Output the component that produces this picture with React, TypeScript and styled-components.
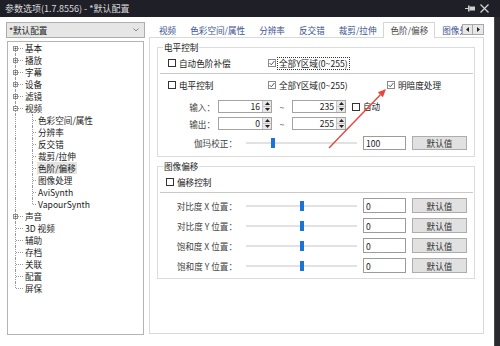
import React from "react";
import styled, { createGlobalStyle } from "styled-components";

const FONT = `"Noto Sans CJK SC", "Noto Sans", sans-serif`;

const Global = createGlobalStyle`
  html, body { margin: 0; padding: 0; background: #fff; }
  body { font-family: ${FONT}; }
  * { box-sizing: border-box; }
`;

const Screen = styled.div`
  position: relative;
  width: 500px;
  height: 346px;
  overflow: hidden;
  display: flex;
  flex-direction: column;
  background: #fff;
  font-family: ${FONT};
  font-size: 8.6px;
  color: #222;
`;

const TitleBar = styled.div`
  height: 17px;
  flex: none;
  background: #1f1f28;
  display: flex;
  align-items: center;
  padding: 0 11px 0 5px;
  color: #dcdcdc;
  font-size: 9px;
`;
const TitleText = styled.div`
  flex: 1;
  white-space: nowrap;
`;
const TitleIcons = styled.div`
  display: flex;
  align-items: center;
  gap: 5px;
`;

const Body = styled.div`
  flex: 1;
  display: flex;
  min-height: 0;
`;
const Win = styled.div`
  width: 494px;
  flex: none;
  display: flex;
  padding: 5px 10px 0 6px;
  gap: 4px;
  background: #fff;
`;
const Strip = styled.div`
  flex: 1;
  background: #2a2a2e;
  border-left: 1px solid #4a4a4e;
`;

/* ---------- left column ---------- */
const LeftCol = styled.div`
  width: 139px;
  flex: none;
  display: flex;
  flex-direction: column;
  gap: 3px;
`;
const Combo = styled.div`
  height: 16px;
  border: 1px solid #adadad;
  background: #e6e6e6;
  display: flex;
  align-items: center;
  padding: 0 5px 0 2px;
  line-height: 14px;
`;
const ComboText = styled.span`
  flex: 1;
`;
const TreeBox = styled.div`
  margin-left: 1px;
  width: 137px;
  height: 294px;
  border: 1px solid #b4b4b4;
  background: #fff;
  display: flex;
  flex-direction: column;
`;
const TreeRow = styled.div`
  height: 12px;
  display: flex;
  align-items: stretch;
`;
const Conn = styled.span<{ $w: number; $x: number; $top: boolean; $bottom: boolean; $tick: boolean }>`
  position: relative;
  flex: none;
  width: ${(p) => p.$w}px;
  height: 12px;
  &::before {
    content: "";
    position: absolute;
    left: ${(p) => p.$x}px;
    top: ${(p) => (p.$top ? 0 : 6)}px;
    bottom: ${(p) => (p.$bottom ? 0 : 6)}px;
    border-left: 1px dotted #9a9a9a;
  }
  &::after {
    content: "";
    display: ${(p) => (p.$tick ? "block" : "none")};
    position: absolute;
    left: ${(p) => p.$x + 1}px;
    width: ${(p) => p.$w - p.$x - 2}px;
    top: 6px;
    border-top: 1px dotted #9a9a9a;
  }
`;
const ExpBox = styled.span`
  position: absolute;
  left: 5px;
  top: 4px;
  width: 5px;
  height: 5px;
  z-index: 1;
  display: block;
  line-height: 0;
`;
const TreeLabel = styled.span<{ $selected?: boolean }>`
  padding: 0 1px;
  line-height: 12px;
  white-space: nowrap;
  color: #1a1a1a;
  background: ${(p) => (p.$selected ? "#e4e4e4" : "transparent")};
`;

/* ---------- right column ---------- */
const RightCol = styled.div`
  width: 335px;
  flex: none;
  display: flex;
  flex-direction: column;
`;
const TabStrip = styled.div`
  height: 15px;
  flex: none;
  display: flex;
  align-items: flex-end;
  padding-left: 3px;
`;
const Tabs = styled.div`
  flex: 1;
  min-width: 0;
  display: flex;
  align-items: flex-end;
  overflow-x: clip;
  overflow-y: visible;
`;
const Tab = styled.span<{ $active?: boolean }>`
  flex: none;
  height: ${(p) => (p.$active ? 16 : 15)}px;
  padding: 0 ${(p) => (p.$active ? 6 : 6)}px;
  line-height: 15px;
  white-space: nowrap;
  color: ${(p) => (p.$active ? "#4a4a4a" : "#3a5590")};
  background: #fff;
  position: relative;
  z-index: ${(p) => (p.$active ? 1 : 0)};
  margin-bottom: ${(p) => (p.$active ? -1 : 0)}px;
  border: ${(p) => (p.$active ? "1px solid #d6d6d6" : "1px solid transparent")};
  border-bottom: none;
`;
const ScrollBtns = styled.div`
  flex: none;
  align-self: flex-start;
  margin-top: 2px;
  display: flex;
`;
const ScrollBtn = styled.span`
  width: 11px;
  height: 11px;
  border: 1px solid #a8a8a8;
  background: #e8e8e8;
  display: flex;
  align-items: center;
  justify-content: center;
  & + & {
    border-left: none;
  }
`;
const TabPage = styled.div`
  height: 297px;
  border: 1px solid #d9d9d9;
  padding: 3px 8px 0 7px;
  display: flex;
  flex-direction: column;
  background: #fff;
`;

const Group = styled.fieldset<{ $pb: number; $mt?: number }>`
  margin: ${(p) => p.$mt ?? 0}px 0 0 0;
  padding: 0 0 ${(p) => p.$pb}px 0;
  border: 1px solid #dcdcdc;
  min-width: 0;
  display: flex;
  flex-direction: column;
`;
const Legend = styled.legend`
  margin-left: 5px;
  padding: 0 1px;
  height: 12px;
  line-height: 12px;
  color: #222;
`;
const Sep = styled.div`
  margin: 4px 1px 0 2px;
  height: 1px;
  background: #c9c9c9;
  flex: none;
`;
const CheckGrid = styled.div<{ $mt: number }>`
  margin-top: ${(p) => p.$mt}px;
  height: 12px;
  display: grid;
  grid-template-columns: 100px 119px 1fr;
  align-items: center;
  padding-left: 10px;
`;
const SingleCheck = styled.div<{ $mt: number; $pl: number }>`
  margin-top: ${(p) => p.$mt}px;
  height: 12px;
  display: flex;
  align-items: center;
  padding-left: ${(p) => p.$pl}px;
`;
const CheckLabel = styled.label<{ $focus?: boolean }>`
  display: flex;
  align-items: center;
  gap: 2px;
  white-space: nowrap;
  line-height: 11px;
`;
const CheckText = styled.span<{ $focus?: boolean }>`
  padding: 0 1px;
  outline: ${(p) => (p.$focus ? "1px dotted #333" : "none")};
`;
const Box = styled.span<{ $checked?: boolean }>`
  flex: none;
  width: 8px;
  height: 8px;
  border: 1px solid ${(p) => (p.$checked ? "#8a8a8a" : "#333")};
  background: #fff;
  display: flex;
  align-items: center;
  justify-content: center;
`;
const SpinRow = styled.div<{ $mt: number }>`
  margin-top: ${(p) => p.$mt}px;
  height: 13px;
  display: grid;
  grid-template-columns: 60px 54px 20px 54px auto;
  align-items: center;
`;
const FieldLabel = styled.span<{ $pr: number }>`
  text-align: right;
  padding-right: ${(p) => p.$pr}px;
  white-space: nowrap;
  color: #444;
`;
const Tilde = styled.span`
  text-align: center;
  color: #444;
`;
const Spin = styled.div`
  height: 13px;
  border: 1px solid #a3a3a3;
  background: #fff;
  display: flex;
`;
const SpinValue = styled.span`
  flex: 1;
  text-align: right;
  padding-right: 2px;
  line-height: 11px;
`;
const SpinBtns = styled.span`
  width: 9px;
  flex: none;
  display: flex;
  flex-direction: column;
  border-left: 1px solid #c4c4c4;
`;
const SpinBtn = styled.span`
  flex: 1;
  background: #e8e8e8;
  display: flex;
  align-items: center;
  justify-content: center;
  & + & {
    border-top: 1px solid #c4c4c4;
  }
`;
const AutoCheck = styled.div`
  margin-left: 6px;
`;
const SliderRow = styled.div<{ $mt: number; $h: number }>`
  margin-top: ${(p) => p.$mt}px;
  height: ${(p) => p.$h}px;
  display: grid;
  grid-template-columns: 82px 111px 43px 55px;
  column-gap: 6px;
  align-items: center;
`;
const Track = styled.div`
  position: relative;
  height: 2px;
  background: #e2e2e2;
`;
const Thumb = styled.span`
  position: absolute;
  top: -4px;
  width: 4px;
  height: 10px;
  background: #1a73d6;
`;
const TextBox = styled.div`
  height: 100%;
  border: 1px solid #9c9c9c;
  background: #fff;
  padding-left: 2px;
  display: flex;
  align-items: center;
`;
const Button = styled.div`
  height: 100%;
  border: 1px solid #adadad;
  background: #e1e1e1;
  display: flex;
  align-items: center;
  justify-content: center;
  color: #333;
`;

const Overlay = styled.svg`
  position: absolute;
  left: 0;
  top: 0;
  pointer-events: none;
`;

/* ---------- small pieces ---------- */
const Expander = ({ kind }: { kind: "plus" | "minus" }) => (
  <ExpBox>
    <svg width="5" height="5" viewBox="0 0 5 5">
      <rect x="0.5" y="0.5" width="4" height="4" fill="#fff" stroke="#8f8f8f" strokeWidth="1" />
      <path d="M1.5 2.5h2" stroke="#555" strokeWidth="1" />
      {kind === "plus" && <path d="M2.5 1.5v2" stroke="#555" strokeWidth="1" />}
    </svg>
  </ExpBox>
);

const CheckMark = () => (
  <svg width="6" height="6" viewBox="0 0 6 6">
    <path d="M0.6 3.1 L2.3 4.8 L5.4 1" fill="none" stroke="#555" strokeWidth="1" />
  </svg>
);

const Check = ({ label, checked, focus }: { label: string; checked?: boolean; focus?: boolean }) => (
  <CheckLabel>
    <Box $checked={checked}>{checked && <CheckMark />}</Box>
    <CheckText $focus={focus}>{label}</CheckText>
  </CheckLabel>
);

const Tri = ({ dir }: { dir: "up" | "down" | "left" | "right" }) => {
  const d =
    dir === "up"
      ? "M0 3 L2.5 0 L5 3Z"
      : dir === "down"
      ? "M0 0 L2.5 3 L5 0Z"
      : dir === "left"
      ? "M3 0 L0 2.5 L3 5Z"
      : "M0 0 L3 2.5 L0 5Z";
  const vertical = dir === "up" || dir === "down";
  return (
    <svg width={vertical ? 5 : 3} height={vertical ? 3 : 5} viewBox={vertical ? "0 0 5 3" : "0 0 3 5"}>
      <path d={d} fill="#222" />
    </svg>
  );
};

const SpinBox = ({ value }: { value: string }) => (
  <Spin>
    <SpinValue>{value}</SpinValue>
    <SpinBtns>
      <SpinBtn>
        <Tri dir="up" />
      </SpinBtn>
      <SpinBtn>
        <Tri dir="down" />
      </SpinBtn>
    </SpinBtns>
  </Spin>
);

const Slider = ({ pos }: { pos: number }) => (
  <Track>
    <Thumb style={{ left: pos }} />
  </Track>
);

type TreeNode = { label: string; exp?: "plus" | "minus"; children?: string[] };

const treeData: TreeNode[] = [
  { label: "基本", exp: "plus" },
  { label: "播放", exp: "plus" },
  { label: "字幕", exp: "plus" },
  { label: "设备", exp: "plus" },
  { label: "滤镜", exp: "plus" },
  {
    label: "视频",
    exp: "minus",
    children: ["色彩空间/属性", "分辨率", "反交错", "裁剪/拉伸", "色阶/偏移", "图像处理", "AviSynth", "VapourSynth"],
  },
  { label: "声音", exp: "plus" },
  { label: "3D 视频" },
  { label: "辅助" },
  { label: "存档" },
  { label: "关联" },
  { label: "配置" },
  { label: "屏保" },
];

const tabs = ["视频", "色彩空间/属性", "分辨率", "反交错", "裁剪/拉伸", "色阶/偏移", "图像处理"];
const offsetRows = ["对比度 X 位置：", "对比度 Y 位置：", "饱和度 X 位置：", "饱和度 Y 位置："];

export default function App() {
  return (
    <>
      <Global />
      <Screen>
        <TitleBar>
          <TitleText>参数选项(1.7.8556) - *默认配置</TitleText>
          <TitleIcons>
            <svg width="10" height="7" viewBox="0 0 10 7">
              <path d="M0 3.5h3" stroke="#cfcfcf" strokeWidth="1" />
              <rect x="3" y="0.5" width="1.5" height="6" fill="#cfcfcf" />
              <rect x="4.5" y="1.5" width="5.5" height="4" fill="#cfcfcf" />
            </svg>
            <svg width="9" height="9" viewBox="0 0 9 9">
              <path d="M0.5 0.5 L8.5 8.5 M8.5 0.5 L0.5 8.5" stroke="#d4d4d4" strokeWidth="1.2" />
            </svg>
          </TitleIcons>
        </TitleBar>
        <Body>
          <Win>
            <LeftCol>
              <Combo>
                <ComboText>*默认配置</ComboText>
                <svg width="6" height="4" viewBox="0 0 6 4">
                  <path d="M0.5 0.5 L3 3 L5.5 0.5" fill="none" stroke="#7a7a7a" strokeWidth="0.9" />
                </svg>
              </Combo>
              <TreeBox>
                {treeData.map((n, i) => {
                  const first = i === 0;
                  const last = i === treeData.length - 1;
                  const kids = n.children ?? [];
                  return (
                    <React.Fragment key={n.label}>
                      <TreeRow>
                        <Conn $w={16} $x={7} $top={!first} $bottom={!last} $tick>
                          {n.exp && <Expander kind={n.exp} />}
                        </Conn>
                        <TreeLabel>{n.label}</TreeLabel>
                      </TreeRow>
                      {kids.map((c, j) => (
                        <TreeRow key={c}>
                          <Conn $w={16} $x={7} $top $bottom $tick={false} />
                          <Conn $w={13} $x={8} $top $bottom={j < kids.length - 1} $tick />
                          <TreeLabel $selected={c === "色阶/偏移"}>{c}</TreeLabel>
                        </TreeRow>
                      ))}
                    </React.Fragment>
                  );
                })}
              </TreeBox>
            </LeftCol>
            <RightCol>
              <TabStrip>
                <Tabs>
                  {tabs.map((t) => (
                    <Tab key={t} $active={t === "色阶/偏移"}>
                      {t}
                    </Tab>
                  ))}
                </Tabs>
                <ScrollBtns>
                  <ScrollBtn>
                    <Tri dir="left" />
                  </ScrollBtn>
                  <ScrollBtn>
                    <Tri dir="right" />
                  </ScrollBtn>
                </ScrollBtns>
              </TabStrip>
              <TabPage>
                <Group $pb={6}>
                  <Legend>电平控制</Legend>
                  <CheckGrid $mt={4}>
                    <Check label="自动色阶补偿" />
                    <Check label="全部Y区域(0~255)" checked focus />
                  </CheckGrid>
                  <Sep />
                  <CheckGrid $mt={5}>
                    <Check label="电平控制" />
                    <Check label="全部Y区域(0~255)" checked />
                    <Check label="明暗度处理" checked />
                  </CheckGrid>
                  <SpinRow $mt={9}>
                    <FieldLabel $pr={3}>输入：</FieldLabel>
                    <SpinBox value="16" />
                    <Tilde>~</Tilde>
                    <SpinBox value="235" />
                    <AutoCheck>
                      <Check label="自动" />
                    </AutoCheck>
                  </SpinRow>
                  <SpinRow $mt={4}>
                    <FieldLabel $pr={3}>输出：</FieldLabel>
                    <SpinBox value="0" />
                    <Tilde>~</Tilde>
                    <SpinBox value="255" />
                  </SpinRow>
                  <SliderRow $mt={6} $h={14}>
                    <FieldLabel $pr={3}>伽玛校正：</FieldLabel>
                    <Slider pos={25} />
                    <TextBox>100</TextBox>
                    <Button>默认值</Button>
                  </SliderRow>
                </Group>
                <Group $pb={5} $mt={3}>
                  <Legend>图像偏移</Legend>
                  <SingleCheck $mt={4} $pl={8}>
                    <Check label="偏移控制" />
                  </SingleCheck>
                  <Sep />
                  {offsetRows.map((r, i) => (
                    <SliderRow key={r} $mt={i === 0 ? 5 : 5} $h={15}>
                      <FieldLabel $pr={3}>{r}</FieldLabel>
                      <Slider pos={54} />
                      <TextBox>0</TextBox>
                      <Button>默认值</Button>
                    </SliderRow>
                  ))}
                </Group>
              </TabPage>
            </RightCol>
          </Win>
          <Strip />
        </Body>
        <Overlay width="500" height="346" viewBox="0 0 500 346">
          <path d="M329 148 L380.4 94.8" stroke="#e8453c" strokeWidth="1.4" fill="none" />
          <path d="M386 89 L382.9 97.2 L377.9 92.3 Z" fill="#e8453c" />
        </Overlay>
      </Screen>
    </>
  );
}
